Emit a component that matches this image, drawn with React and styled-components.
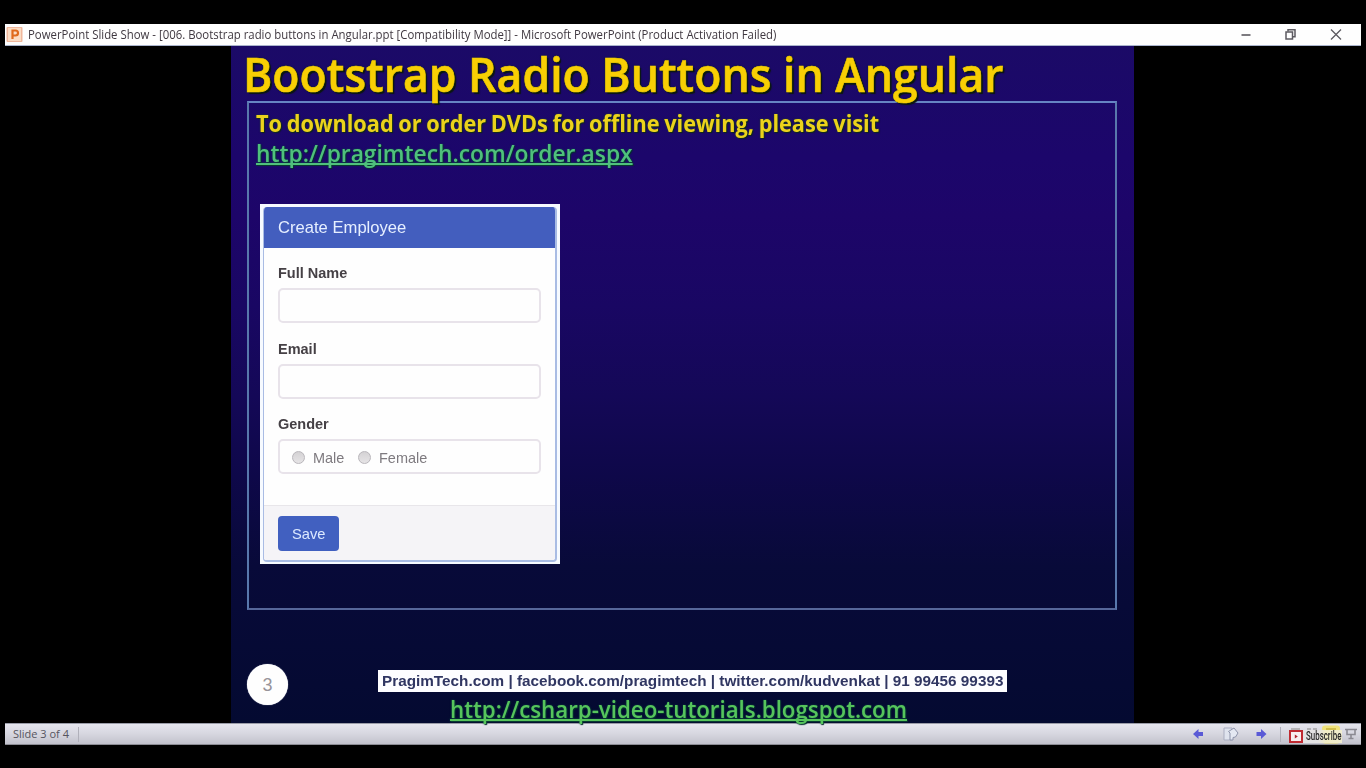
import React from "react";
import styled, { createGlobalStyle } from "styled-components";

const GlobalStyle = createGlobalStyle`
  * { box-sizing: border-box; }
  html, body { margin: 0; background: #000; }
  body { width: 1366px; height: 768px; overflow: hidden; font-family: "Liberation Sans", Arial, sans-serif; }
`;

const Screen = styled.div`
  width: 1366px;
  height: 768px;
  padding: 24px 5px 0 5px;
  background: #000;
  display: flex;
  flex-direction: column;
`;

const TitleBar = styled.header`
  flex: none;
  width: 1356px;
  height: 22px;
  background: #fefefe;
  display: flex;
  align-items: center;
  border-bottom: 1px solid #aab4cc;
`;

const AppIcon = styled.svg`
  flex: none;
  width: 17px;
  height: 17px;
  margin: 0 5px 0 1px;
`;

const Label = styled.span`
  display: block;
  flex: none;
  width: max-content;
  white-space: nowrap;
  transform-origin: 0 50%;
  transform: scaleX(${(p) => p.$stretch || 1});
`;

const WindowTitle = styled(Label)`
  font: 12px/20px "Open Sans", "Noto Sans", sans-serif;
  color: #3f3840;
`;

const WindowControls = styled.div`
  margin-left: auto;
  padding-right: 18px;
  display: flex;
  gap: 31px;
  height: 20px;
  align-items: center;
  svg { width: 14px; height: 14px; display: block; }
`;

const Stage = styled.main`
  flex: none;
  height: 677px;
  padding-left: 226px;
`;

const Slide = styled.section`
  width: 903px;
  height: 677px;
  padding: 0 17px 0 16px;
  background: linear-gradient(#1b0a67 0, #1c066b 110px, #1d0569 170px, #190763 260px, #140857 350px, #0e0849 430px, #080a39 520px, #060a35 600px, #040a31 677px);
  display: flex;
  flex-direction: column;
`;

const SlideTitle = styled.h1`
  margin: 0 0 0 -4px;
  flex: none;
  height: 55px;
  position: relative;
  font: 600 47px/57px "Open Sans", "Noto Sans", sans-serif;
  color: #f8cf04;
  -webkit-text-stroke: 0.6px #f8cf04;
  text-shadow: 0 0 2px #10360c, 2px 2px 1px #0c1710;
`;

const ContentBox = styled.div`
  flex: none;
  width: 870px;
  height: 509px;
  border: 2px solid;
  border-color: #6684c4 #5878ac #56679a #5878ac;
  padding: 5px 0 0 7px;
`;

const Lead = styled(Label)`
  font: 700 23px/30px "Open Sans", "Noto Sans", sans-serif;
  color: #ecd21c;
  word-spacing: -1px;
  text-shadow: 0 0 2px #24501c, 1px 1px 1px #0c2018;
`;

const SlideLink = styled(Label)`
  font: 600 23px/30px "Open Sans", "Noto Sans", sans-serif;
  color: ${(p) => p.$color};
  text-shadow: 0 0 2px #0c5040, 1px 1px 1px #042c28;
  text-decoration: underline;
  text-decoration-thickness: 1.5px;
  text-underline-offset: 1px;
  text-decoration-skip-ink: none;
`;

const CardFrame = styled.div`
  width: 300px;
  height: 360px;
  margin: 36px 0 0 4px;
  padding: 3px 3px 2px 3px;
  background: #f6faff;
`;

const Card = styled.div`
  height: 355px;
  border: 1px solid #a9bce4;
  border-width: 0 2px 2px 1px;
  border-radius: 4px;
  overflow: hidden;
  background: #fefefe;
  display: flex;
  flex-direction: column;
`;

const CardHeader = styled.div`
  height: 41px;
  flex: none;
  padding-left: 14px;
  background: #435ebe;
  color: #e6efff;
  font-size: 17px;
  line-height: 41px;
`;

const CardBody = styled.div`
  flex: none;
  height: 257px;
  padding: 16px 0 0 14px;
`;

const Field = styled.div`
  height: 75.5px;
`;

const FieldLabel = styled(Label)`
  font-weight: bold;
  font-size: 14px;
  line-height: 18px;
  color: #454045;
`;

const FieldBox = styled.div`
  margin-top: 6px;
  height: 35px;
  width: 263px;
  border: 2px solid #e8e3ea;
  border-radius: 5px;
  display: flex;
  align-items: center;
  padding: 2px 0 0 12px;
`;

const Radio = styled.span`
  flex: none;
  width: 13px;
  height: 13px;
  border-radius: 50%;
  border: 1px solid #b9b6bb;
  background: linear-gradient(#d4d2d4, #e6e4e6);
`;

const RadioText = styled(Label)`
  width: ${(p) => p.$width}px;
  margin-left: 8px;
  font-size: 15px;
  line-height: 20px;
  color: #7e7a7f;
`;

const CardFooter = styled.div`
  flex: 1;
  padding: 10px 0 0 14px;
  border-top: 1px solid #e8e6ea;
  background: #f5f4f7;
`;

const SaveButton = styled.div`
  width: 61px;
  height: 35px;
  border-radius: 4px;
  background: #4160c0;
  color: #dce9ff;
  font-size: 15px;
  line-height: 35px;
  padding-left: 14px;
`;

const SlideFooter = styled.footer`
  flex: 1;
  display: flex;
  align-items: flex-start;
  padding-top: 54px;
`;

const PageNumber = styled.div`
  width: 41px;
  height: 41px;
  border-radius: 50%;
  background: #fefefe;
  color: #98949a;
  font-size: 18px;
  line-height: 42px;
  text-align: center;
  box-shadow: 0 0 1px #cfd2e0;
`;

const Contact = styled.div`
  margin: 6px 0 0 90px;
`;

const ContactStrip = styled.div`
  width: 629px;
  height: 22px;
  background: #fdfdff;
  color: #303662;
  font-weight: bold;
  font-size: 15px;
  line-height: 21px;
  padding-left: 4px;
`;

const BlogRow = styled.div`
  height: 30px;
  padding: 2px 0 0 72px;
`;

const StatusBar = styled.div`
  flex: none;
  width: 1356px;
  height: 22px;
  background: linear-gradient(#e6e6ee, #d6d6df 50%, #c2c2cc);
  border-top: 1px solid #9a9ca8;
  border-bottom: 1px solid #8c8c94;
  display: flex;
  align-items: center;
`;

const SlideCount = styled(Label)`
  width: 65px;
  margin-left: 8px;
  font: 11px/18px "Open Sans", "Noto Sans", sans-serif;
  color: #55545e;
`;

const Divider = styled.span`
  width: 1px;
  height: 15px;
  background: #b0b0ba;
`;

const ToolsArea = styled.div`
  margin-left: auto;
  position: relative;
  height: 20px;
`;

const Tools = styled.svg`
  width: 172px;
  height: 20px;
  display: block;
`;

const Subscribe = styled.div`
  position: absolute;
  left: 100px;
  top: 6px;
  width: 53px;
  height: 13px;
  display: flex;
  align-items: center;
  background: linear-gradient(90deg, #e4e3e4 55%, #f1edc4 70%, #efeccf);
  svg { width: 14px; height: 13px; flex: none; }
`;

const SubscribeText = styled(Label)`
  margin-left: 3px;
  font: 500 12px/13px Roboto, sans-serif;
  color: #252525;
`;

export default function App() {
  return (
    <Screen>
      <GlobalStyle />
      <TitleBar>
        <AppIcon viewBox="0 0 17 17">
          <rect x=".5" y="1" width="16" height="15" rx="1" fill="#f0b79c" />
          <rect x="2" y="2" width="13" height="13" fill="#fbdcc4" />
          <path d="M6.500 13V4.500h3a2.400 2.400 0 0 1 0 5h-3" fill="none" stroke="#e06a1c" strokeWidth="2.200" />
        </AppIcon>
        <WindowTitle $stretch={0.949}>PowerPoint Slide Show - [006. Bootstrap radio buttons in Angular.ppt [Compatibility Mode]] - Microsoft PowerPoint (Product Activation Failed)</WindowTitle>
        <WindowControls>
          <svg viewBox="0 0 14 14"><path d="M2.500 7h9" stroke="#5c5a60" strokeWidth="1.600" /></svg>
          <svg viewBox="0 0 14 14" fill="none" stroke="#5c5a60" strokeWidth="1.500"><rect x="2" y="4" width="6.500" height="7" /><path d="M4 3.500V1.700h7v7H9" /></svg>
          <svg viewBox="0 0 14 14"><path d="M2 1.500l10 10M12 1.500L2 11.500" stroke="#5c5a60" strokeWidth="1.300" /></svg>
        </WindowControls>
      </TitleBar>
      <Stage>
        <Slide>
          <SlideTitle><Label $stretch={0.948}>Bootstrap Radio Buttons in Angular</Label></SlideTitle>
          <ContentBox>
            <Lead $stretch={0.944}>To download or order DVDs for offline viewing, please visit</Lead>
            <SlideLink $stretch={0.99} $color="#4fc07c">http://pragimtech.com/order.aspx</SlideLink>
            <CardFrame>
              <Card>
                <CardHeader><Label $stretch={0.977}>Create Employee</Label></CardHeader>
                <CardBody>
                  <Field><FieldLabel $stretch={1.035}>Full Name</FieldLabel><FieldBox /></Field>
                  <Field><FieldLabel $stretch={1.035}>Email</FieldLabel><FieldBox /></Field>
                  <Field>
                    <FieldLabel $stretch={1.035}>Gender</FieldLabel>
                    <FieldBox>
                      <Radio /><RadioText $stretch={0.965} $width={45}>Male</RadioText>
                      <Radio /><RadioText $stretch={0.965} $width={50}>Female</RadioText>
                    </FieldBox>
                  </Field>
                </CardBody>
                <CardFooter><SaveButton><Label $stretch={0.98}>Save</Label></SaveButton></CardFooter>
              </Card>
            </CardFrame>
          </ContentBox>
          <SlideFooter>
            <PageNumber>3</PageNumber>
            <Contact>
              <ContactStrip><Label $stretch={1.02}>PragimTech.com | facebook.com/pragimtech | twitter.com/kudvenkat | 91 99456 99393</Label></ContactStrip>
              <BlogRow><SlideLink $stretch={0.969} $color="#56c45c">http://csharp-video-tutorials.blogspot.com</SlideLink></BlogRow>
            </Contact>
          </SlideFooter>
        </Slide>
      </Stage>
      <StatusBar>
        <SlideCount>Slide 3 of 4</SlideCount>
        <Divider />
        <ToolsArea>
          <Tools viewBox="0 0 172 20">
            <path d="M4 10l5.500-5v3h4.500v4H9.500v3z" fill="#5a5ad6" />
            <path d="M35 4h8v12h-8z" fill="#dfe3ee" stroke="#a9adc0" />
            <path d="M41 16V9l-1.500-1.500L45 4l4 5-2.500 4-2.500.5V16z" fill="#e4e8f2" stroke="#8d93aa" />
            <path d="M77.500 10L72 5v3h-4.500v4H72v3z" fill="#5a5ad6" />
            <path d="M91.500 3v15" stroke="#b0b0ba" />
            <path d="M102 5h9M118 5h4M124 5h4" stroke="#b4b3b6" strokeWidth="2" />
            <rect x="133" y="1.500" width="18" height="18" rx="3" fill="#efe27a" />
            <path d="M137 5h10" stroke="#d0bd4c" strokeWidth="2" />
            <path d="M156 5.500h12M158 6v4.500h8V6M162 10.500v3.500M159.500 14.500h5" fill="none" stroke="#8b8a92" strokeWidth="1.600" />
          </Tools>
          <Subscribe>
            <svg viewBox="0 0 14 13"><rect x="1" y="1" width="12" height="11" fill="#f7eeee" stroke="#bf2a31" strokeWidth="2" /><path d="M5.800 4.500v4l3-2z" fill="#b3232b" /></svg>
            <SubscribeText $stretch={0.66}>Subscribe</SubscribeText>
          </Subscribe>
        </ToolsArea>
      </StatusBar>
    </Screen>
  );
}
